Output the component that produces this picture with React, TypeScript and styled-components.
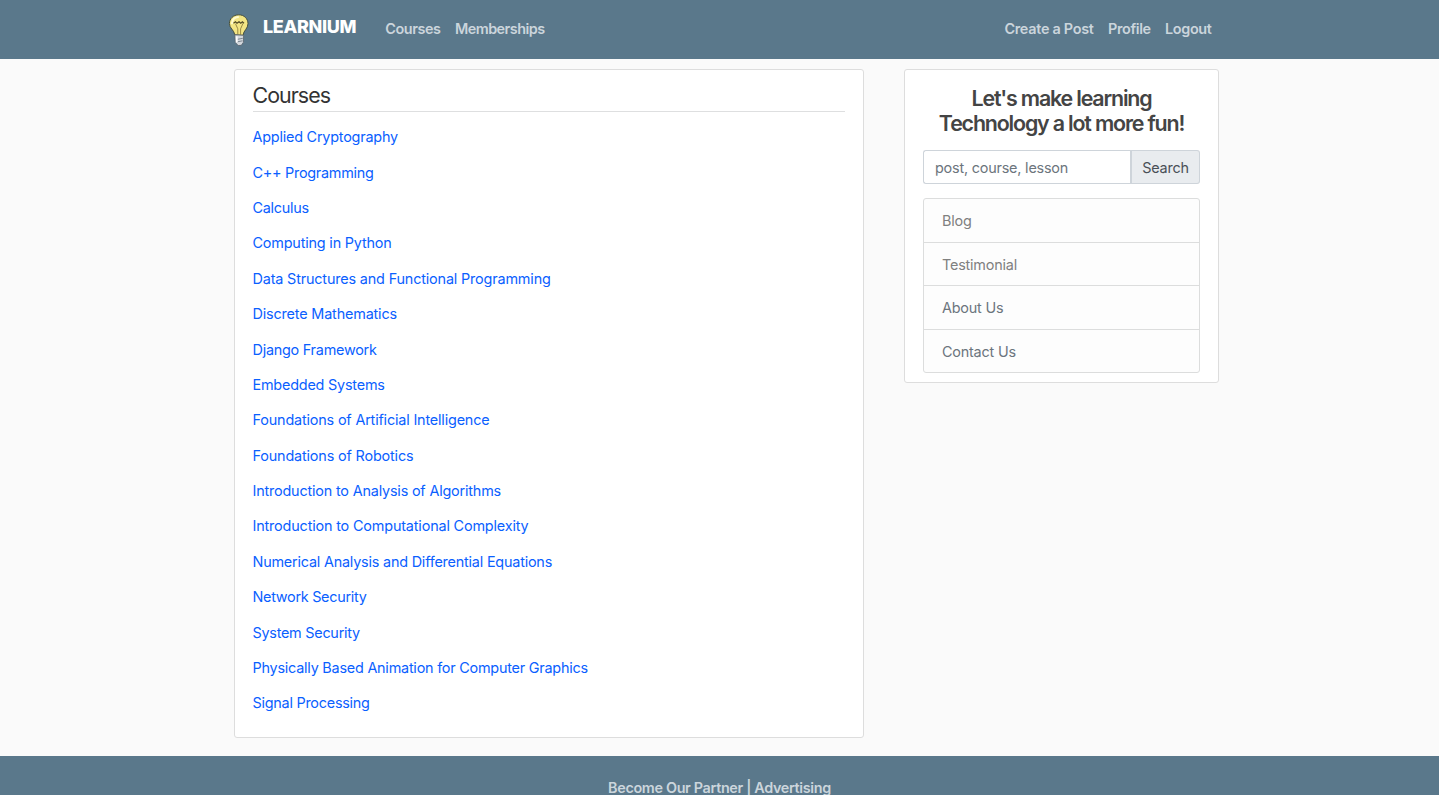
import React from "react";
import styled, { createGlobalStyle } from "styled-components";

const GlobalStyle = createGlobalStyle`
  *, *::before, *::after { box-sizing: border-box; }
  html { height: 100%; overflow: hidden; }
  body {
    margin: 0;
    height: 795px;
    overflow: hidden;
    background: #fafafa;
    color: #333;
    font-family: Inter, "Liberation Sans", sans-serif;
    font-size: 14.4px;
    line-height: 21.6px;
  }
`;

const Page = styled.div`
  display: flex;
  flex-direction: column;
  height: 795px;
  overflow: hidden;
`;

const Header = styled.header`
  flex: none;
  height: 59px;
  background: #5a788b;
`;

const NavBar = styled.nav`
  display: flex;
  align-items: center;
  width: 983.5px;
  height: 58px;
  margin-left: 228px;
`;

const Brand = styled.a`
  display: flex;
  align-items: center;
  width: 157.3px;
  color: #fff;
  text-decoration: none;
`;

const BrandName = styled.span`
  margin: -5px 0 0 13px;
  font-size: 18px;
  font-weight: 800;
  letter-spacing: -0.35px;
`;

const NavLinks = styled.div`
  display: flex;
  gap: 14.4px;

  & + & { margin-left: auto; }
`;

const NavLink = styled.a<{ $spacing?: number }>`
  color: #cbd5dc;
  font-weight: 590;
  letter-spacing: ${(p) => p.$spacing ?? -0.36}px;
  white-space: nowrap;
  text-decoration: none;
`;

const Main = styled.main`
  flex: none;
  display: flex;
  align-items: flex-start;
  gap: 40px;
  height: 697px;
  padding: 10px 0 0 234px;
`;

const Panel = styled.section`
  background: #fff;
  border: 1px solid #dddddd;
  border-radius: 3px;
`;

const CoursesPanel = styled(Panel)`
  width: 630px;
  height: 669px;
  padding: 12px 18px 0 17.5px;
`;

const Title = styled.h1`
  height: 30px;
  margin: 0 0 7.37px;
  border-bottom: 1px solid #dedfe0;
  color: #333;
  font-size: 21.4px;
  font-weight: 400;
  line-height: 27px;
  letter-spacing: -0.95px;
`;

const CourseList = styled.ul`
  margin: 0;
  padding: 0;
  list-style: none;
`;

const CourseItem = styled.li`
  display: flex;
  align-items: center;
  height: 35.375px;
`;

const CourseLink = styled.a<{ $spacing?: number }>`
  color: #0a60ff;
  letter-spacing: ${(p) => p.$spacing ?? -0.2}px;
  white-space: nowrap;
  text-decoration: none;
`;

const SidePanel = styled(Panel)`
  width: 315px;
  height: 314px;
  padding: 16px 18px 0;
`;

const Slogan = styled.h2`
  margin: 0 0 14px;
  color: #444;
  font-size: 21.4px;
  font-weight: 570;
  line-height: 25px;
  letter-spacing: -1.17px;
  text-align: center;
  white-space: nowrap;
`;

const SearchForm = styled.form`
  display: flex;
  height: 34px;
  margin-bottom: 14px;
`;

const SearchInput = styled.input`
  width: 207px;
  padding: 2px 11px 0;
  border: 1px solid #ced4da;
  border-right-width: 0;
  border-radius: 3px 0 0 3px;
  background: #fff;
  font: inherit;
  letter-spacing: -0.2px;

  &::placeholder { color: #6c757d; opacity: 1; }
`;

const SearchButton = styled.button`
  flex: 1;
  padding: 2px 0 0;
  border: 1px solid #ced4da;
  border-left-width: 2px;
  border-radius: 0 3px 3px 0;
  background: #e9ecef;
  color: #495057;
  font: inherit;
  letter-spacing: -0.2px;
`;

const Menu = styled.div`
  display: flex;
  flex-direction: column;
  height: 175px;
  border: 1px solid #dcdddd;
  border-radius: 3px;
  background: #fdfdfd;
`;

const MenuLink = styled.a<{ $cool?: boolean }>`
  flex: 1;
  display: flex;
  align-items: center;
  padding: 2px 18px 0;
  color: ${(p) => (p.$cool ? "#6c757d" : "#808080")};
  letter-spacing: -0.2px;
  text-decoration: none;

  & + & { border-top: 1px solid #dcdddd; }
`;

const Footer = styled.footer`
  flex: none;
  height: 60px;
  padding-top: 21px;
  background: #5a788b;
  color: #cbd5dc;
  font-weight: 590;
  letter-spacing: -0.34px;
  text-align: center;
`;

const courses: { name: string; spacing?: number }[] = [
  { name: "Applied Cryptography", spacing: -0.21 },
  { name: "C++ Programming", spacing: -0.26 },
  { name: "Calculus", spacing: -0.26 },
  { name: "Computing in Python", spacing: -0.18 },
  { name: "Data Structures and Functional Programming", spacing: -0.16 },
  { name: "Discrete Mathematics", spacing: -0.16 },
  { name: "Django Framework", spacing: -0.24 },
  { name: "Embedded Systems" },
  { name: "Foundations of Artificial Intelligence", spacing: -0.17 },
  { name: "Foundations of Robotics", spacing: -0.16 },
  { name: "Introduction to Analysis of Algorithms", spacing: -0.18 },
  { name: "Introduction to Computational Complexity", spacing: -0.16 },
  { name: "Numerical Analysis and Differential Equations" },
  { name: "Network Security", spacing: -0.28 },
  { name: "System Security", spacing: -0.25 },
  { name: "Physically Based Animation for Computer Graphics", spacing: -0.22 },
  { name: "Signal Processing", spacing: -0.24 },
];

function Bulb() {
  return (
    <svg width="22" height="34" viewBox="0 -0.8 22 34" fill="none">
      <path
        d="M10.800 2C5.200 2 1.400 6 1.400 10.800c0 4.700 4.600 6.200 5.400 11.200l8.200.5c.6-5 5-6.500 5-11.700C20 6 16.200 2 10.800 2Z"
        fill="#f3e584"
        stroke="#46503f"
        strokeWidth="1"
      />
      <path d="M4 10.500c.3-3.500 2.800-6 6-6.300" stroke="#fffbd0" strokeWidth="2" strokeLinecap="round" />
      <path d="M5.500 10.500l2-1.500 1.500 1.500 2-1.500 1.800 1.500 1.500-1.500 1.700 1.500" stroke="#4f4826" strokeWidth="1.200" />
      <path d="M7.500 11l2.300 5v6M15 10.500L12.600 16v6" stroke="#8e7f3e" strokeWidth=".9" />
      <path d="M6.800 22l8.800.5-.2 7-2 3-3.200.3-2.900-3.200Z" fill="#d3d8dd" stroke="#56616a" strokeWidth=".8" />
      <path d="M9.500 26.500l5.300-1M9.500 29l5-1" stroke="#717b85" strokeWidth=".9" />
      <path d="M8.700 23.500v6" stroke="#fff" strokeWidth="1.800" />
    </svg>
  );
}

export default function App() {
  return (
    <Page>
      <GlobalStyle />
      <Header>
        <NavBar>
          <Brand>
            <Bulb />
            <BrandName>LEARNIUM</BrandName>
          </Brand>
          <NavLinks>
            <NavLink $spacing={-0.42}>Courses</NavLink>
            <NavLink $spacing={-0.52}>Memberships</NavLink>
          </NavLinks>
          <NavLinks>
            <NavLink $spacing={-0.27}>Create a Post</NavLink>
            <NavLink>Profile</NavLink>
            <NavLink>Logout</NavLink>
          </NavLinks>
        </NavBar>
      </Header>
      <Main>
        <CoursesPanel>
          <Title>Courses</Title>
          <CourseList>
            {courses.map((c) => (
              <CourseItem key={c.name}>
                <CourseLink $spacing={c.spacing}>{c.name}</CourseLink>
              </CourseItem>
            ))}
          </CourseList>
        </CoursesPanel>
        <SidePanel>
          <Slogan>
            Let's make learning
            <br />
            Technology a lot more fun!
          </Slogan>
          <SearchForm>
            <SearchInput placeholder="post, course, lesson" />
            <SearchButton type="button">Search</SearchButton>
          </SearchForm>
          <Menu>
            <MenuLink>Blog</MenuLink>
            <MenuLink>Testimonial</MenuLink>
            <MenuLink $cool>About Us</MenuLink>
            <MenuLink $cool>Contact Us</MenuLink>
          </Menu>
        </SidePanel>
      </Main>
      <Footer>Become Our Partner | Advertising</Footer>
    </Page>
  );
}
